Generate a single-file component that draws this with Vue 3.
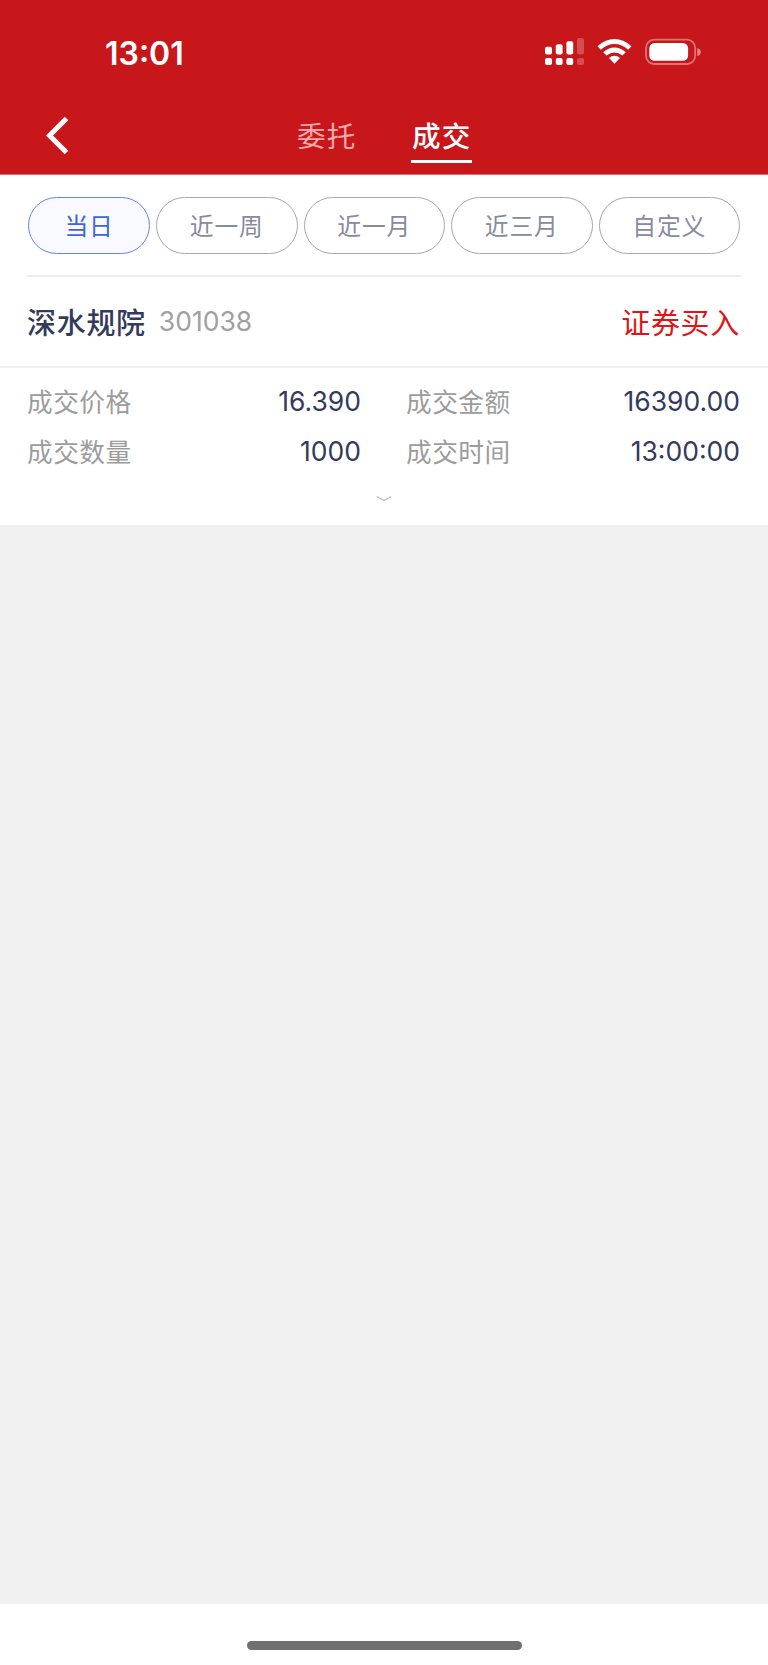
<script setup>
const ranges = ['当日', '近一周', '近一月', '近三月', '自定义']
const fields = [
  { label: '成交价格', value: '16.390' },
  { label: '成交金额', value: '16390.00' },
  { label: '成交数量', value: '1000' },
  { label: '成交时间', value: '13:00:00' },
]
</script>

<template>
  <div class="screen">
    <header class="header">
      <div class="status">
        <span class="clock">13:01</span>
        <svg class="status-icons" width="160" height="32" viewBox="0 0 160 32">
          <g fill="#fff">
            <rect x="0" y="8.8" width="7" height="7.8" rx="2" />
            <rect x="10.8" y="6.3" width="6.8" height="10.3" rx="2" />
            <rect x="21.4" y="3.2" width="6.8" height="13.4" rx="2" />
            <rect x="0" y="20" width="7" height="7" rx="2" />
            <rect x="10.8" y="20" width="6.8" height="7" rx="2" />
            <rect x="21.4" y="20" width="6.8" height="7" rx="2" />
            <g opacity=".23">
              <rect x="32" y="0" width="7" height="16.6" rx="2" />
              <rect x="32" y="20" width="7" height="7" rx="2" />
            </g>
            <path d="M52.5 8.2Q60.7 1 69.5 1Q78.3 1 86.5 8.2L83.2 11.7Q77 6 69.5 6Q62 6 55.8 11.7Z" />
            <path d="M58.2 14.2Q63.4 9.4 69.5 9.4Q75.6 9.4 80.8 14.2L77.4 17.6Q73.6 14.4 69.5 14.4Q65.4 14.4 61.6 17.6Z" />
            <path d="M64 20Q66.4 17.8 69.5 17.8Q72.6 17.8 75 20L69.5 25.8Z" />
            <rect x="104.3" y="4.9" width="38.8" height="17.8" rx="5.3" />
            <path d="M152.3 10Q155.8 11 155.8 14Q155.8 17 152.3 18Z" opacity=".48" />
          </g>
          <rect x="101" y="1.7" width="49.2" height="24.3" rx="8.2" fill="none" stroke="#fff" stroke-opacity=".4" stroke-width="1.8" />
        </svg>
      </div>
      <nav class="nav">
        <svg class="back" width="24" height="40" viewBox="0 0 24 40">
          <path d="M20.5 2.5L3.5 19.5L20.5 36.5" fill="none" stroke="#fff" stroke-width="5" />
        </svg>
        <span class="tab">委托</span>
        <span class="tab active">成交</span>
      </nav>
    </header>

    <section class="filters">
      <span v-for="(range, i) in ranges" :key="range" class="pill" :class="{ selected: i === 0 }">{{ range }}</span>
    </section>

    <section class="stock">
      <span class="name">深水规院</span>
      <span class="code">301038</span>
      <span class="side">证券买入</span>
    </section>

    <section class="details">
      <div class="grid">
        <div v-for="f in fields" :key="f.label" class="field">
          <span class="label">{{ f.label }}</span>
          <span class="value">{{ f.value }}</span>
        </div>
      </div>
      <svg class="expand" width="18" height="8" viewBox="0 0 18 8">
        <path d="M1.8 1.5L9 5.6L16.2 1.5" fill="none" stroke="#b9bac4" stroke-width="1.3" />
      </svg>
    </section>

    <main class="empty"></main>
    <footer class="footer"><div class="home-bar"></div></footer>
  </div>
</template>

<style>
body { margin: 0; }
</style>

<style scoped>
.screen {
  width: 768px;
  height: 1665px;
  display: flex;
  flex-direction: column;
  overflow: hidden;
  background: #fff;
  font-family: Inter, "Noto Sans CJK SC", sans-serif;
  color: #343b5a;
  white-space: nowrap;
}
.header {
  box-sizing: border-box;
  height: 175px;
  flex: none;
  background: #c7171b;
  border-bottom: 1px solid #de6d71;
  color: #fff;
}
.status {
  height: 100px;
  display: flex;
  justify-content: space-between;
  box-sizing: border-box;
  padding: 38px 63px 0 105px;
}
.clock {
  font-size: 32px;
  line-height: 31px;
  font-weight: 600;
  letter-spacing: 0;
}
.nav {
  height: 74px;
  display: flex;
}
.back { margin: 16px 0 0 46px; }
.tab {
  box-sizing: border-box;
  width: 61px;
  height: 63px;
  padding: 15px 0 0 1px;
  font-size: 28.6px;
  line-height: 44px;
  letter-spacing: 1.1px;
  color: #f7a9ad;
  margin-left: 226px;
}
.tab.active {
  margin-left: 54px;
  color: #fff;
  font-weight: 500;
  border-bottom: 3px solid #fff;
}
.filters {
  box-sizing: border-box;
  height: 102px;
  flex: none;
  margin: 0 27px;
  padding: 22px 1px 0;
  display: flex;
  gap: 6px;
  border-bottom: 2px solid #eeeef0;
}
.pill {
  box-sizing: border-box;
  height: 57px;
  flex: 1;
  border: 1px solid #a4a7b5;
  border-radius: 29px;
  font-size: 23.8px;
  line-height: 57px;
  letter-spacing: 0.8px;
  text-align: center;
  color: #868b9f;
}
.pill.selected {
  flex: 0 0 122px;
  color: #4263e0;
  border-color: #6685eb;
  background: #f8faff;
}
.stock {
  box-sizing: border-box;
  height: 91px;
  flex: none;
  padding: 0 28px 2px 27px;
  display: flex;
  align-items: center;
  border-bottom: 2px solid #f0f0f0;
}
.name { font-size: 29px; letter-spacing: 0.7px; font-weight: 500; }
.code { margin-left: 13px; font-size: 26.5px; color: #a0a0a0; }
.side { margin-left: auto; font-size: 29px; letter-spacing: 0.7px; color: #e11515; }
.details {
  height: 157px;
  flex: none;
  display: flex;
  flex-direction: column;
  align-items: center;
}
.grid {
  align-self: stretch;
  margin: 8px 28px 0 27px;
  display: grid;
  grid-template-columns: 334px 334px;
  grid-template-rows: 50px 50px;
  column-gap: 45px;
}
.field {
  display: flex;
  justify-content: space-between;
  align-items: center;
}
.label {
  padding-bottom: 2px;
  font-size: 25.7px;
  letter-spacing: 0.5px;
  color: #9c9c9c;
}
.value { font-size: 26.5px; }
.expand { margin-top: 19px; }
.empty { flex: 1; background: #f1f1f1; }
.footer {
  height: 61px;
  flex: none;
  display: flex;
  justify-content: center;
}
.home-bar {
  width: 275px;
  height: 9px;
  margin-top: 37px;
  border-radius: 5px;
  background: #707070;
}
</style>
